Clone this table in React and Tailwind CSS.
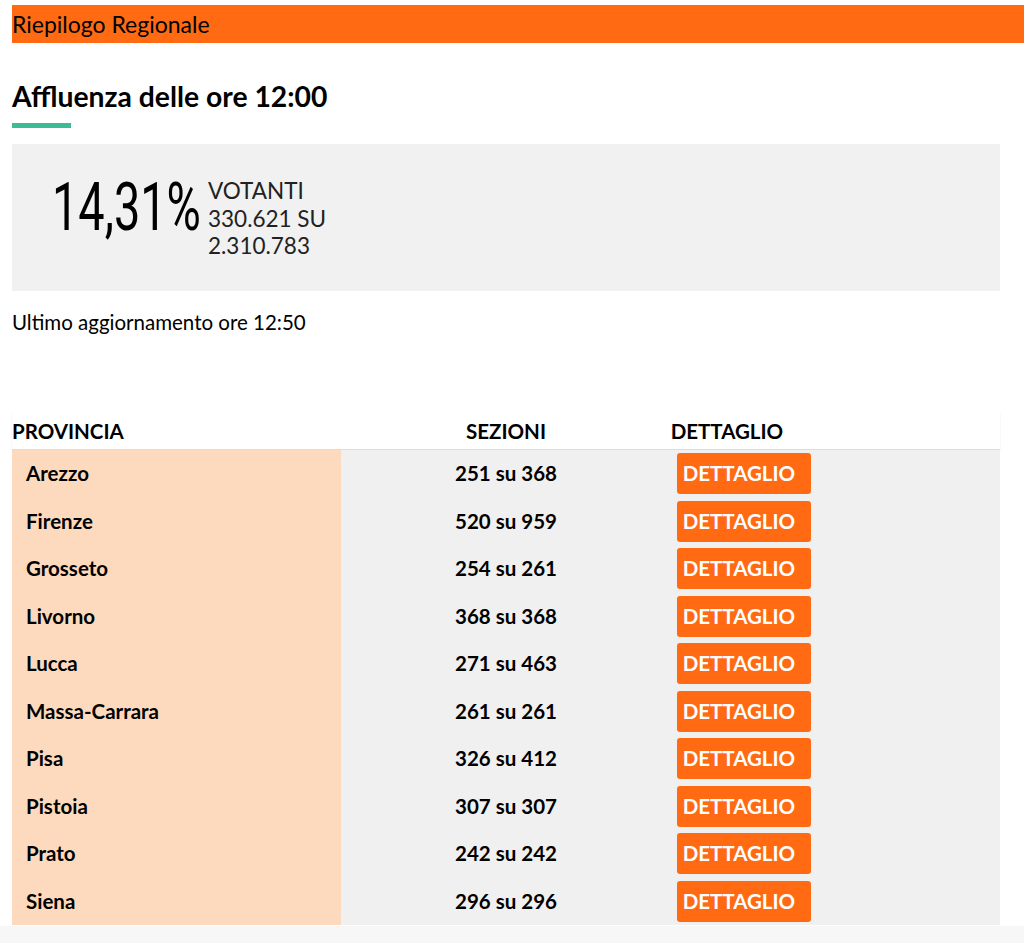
// Riepilogo regionale affluenza
const rows = [
  ['Arezzo', '251 su 368'],
  ['Firenze', '520 su 959'],
  ['Grosseto', '254 su 261'],
  ['Livorno', '368 su 368'],
  ['Lucca', '271 su 463'],
  ['Massa-Carrara', '261 su 261'],
  ['Pisa', '326 su 412'],
  ['Pistoia', '307 su 307'],
  ['Prato', '242 su 242'],
  ['Siena', '296 su 296'],
];

export default function App() {
  return (
    <div className="min-h-[943px] bg-white text-black font-['Lato','Noto_Sans',sans-serif]">
      <div className="pt-[5px] pl-3">
        <div className="h-[38px] bg-[#ff6a13] flex items-center text-[23px] leading-none">Riepilogo Regionale</div>
      </div>

      <div className="px-3">
        <h2 className="mt-[36px] text-[28.3px] font-bold leading-[34px]">Affluenza delle ore 12:00</h2>
        <div className="mt-[10px] w-[59px] h-[5px] bg-[#3dba96]" />

        <div className="mt-[16px] w-[988px] h-[147px] bg-[#f1f1f1] flex items-start pl-[40px]">
          <span className="mt-[31px] w-[156px] h-[70px] overflow-visible whitespace-nowrap">
            <span className="inline-block origin-left scale-x-[0.71] font-['Roboto',sans-serif] font-normal text-[66px] leading-[66px]">14,31%</span>
          </span>
          <div className="mt-[33px] text-[22.5px] leading-[27.5px] text-[#222]">
            <div>VOTANTI</div>
            <div>330.621 SU</div>
            <div>2.310.783</div>
          </div>
        </div>

        <p className="mt-[20px] text-[20.5px] leading-[22px]">Ultimo aggiornamento ore 12:50</p>

        <div className="mt-[80px] w-[988px]">
          <div className="grid grid-cols-3 h-[37px] items-center font-bold text-[20.5px] border-b border-[#ddd] shadow-[0_1px_2px_rgba(0,0,0,0.08)]">
            <div>PROVINCIA</div>
            <div className="text-center">SEZIONI</div>
            <div>DETTAGLIO</div>
          </div>
          {rows.map(([name, sez]) => (
            <div key={name} className="grid grid-cols-3 h-[47.5px] items-center font-bold text-[20.5px] bg-[#f0f0f0]">
              <div className="h-full bg-[#fdd9bd] flex items-center pl-[14px]">{name}</div>
              <div className="text-center">{sez}</div>
              <div className="pl-[6px]">
                <button className="w-[134px] h-[41px] rounded-[3px] bg-[#ff6a13] text-white text-left pl-[6px] text-[20.5px] font-bold">DETTAGLIO</button>
              </div>
            </div>
          ))}
        </div>
      </div>
      <div className="mt-px h-[20px] bg-[#f7f7f7]" />
    </div>
  );
}
